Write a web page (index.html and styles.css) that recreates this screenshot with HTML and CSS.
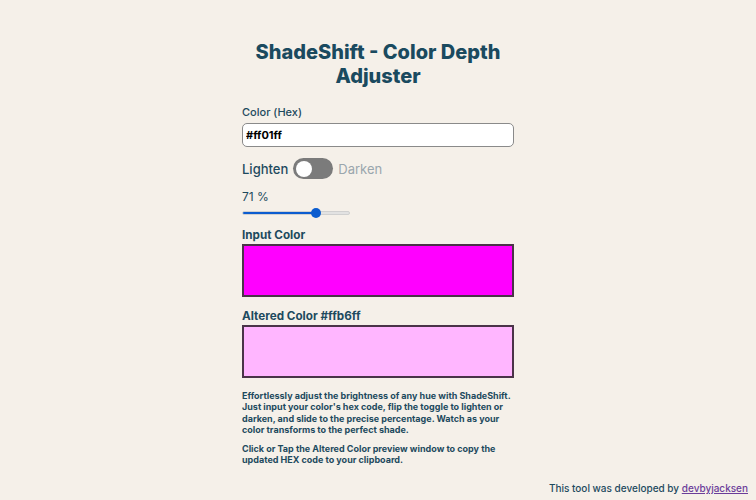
FILE: index.html
```html
<!DOCTYPE html>
<html lang="en">
<head>
<meta charset="utf-8">
<title>ShadeShift - Color Depth Adjuster</title>
<link rel="stylesheet" href="styles.css">
</head>
<body>
<main class="app">
  <h1 class="title">ShadeShift - Color Depth Adjuster</h1>
  <label class="label" for="hex">Color (Hex)</label>
  <input id="hex" class="hex-input" type="text" value="#ff01ff">
  <div class="toggle-row">
    <span class="toggle-text">Lighten</span>
    <span class="switch"><span class="knob"></span></span>
    <span class="toggle-text muted">Darken</span>
  </div>
  <div class="percent">71 %</div>
  <div class="slider">
    <div class="slider-fill" style="width:69%"></div>
    <div class="slider-thumb" style="left:69%"></div>
  </div>
  <h2 class="section first">Input Color</h2>
  <div class="swatch swatch-input"></div>
  <h2 class="section">Altered Color #ffb6ff</h2>
  <div class="swatch swatch-altered"></div>
  <p class="desc">Effortlessly adjust the brightness of any hue with ShadeShift. Just input your color's hex code, flip the toggle to lighten or darken, and slide to the precise percentage. Watch as your color transforms to the perfect shade.</p>
  <p class="desc">Click or Tap the Altered Color preview window to copy the updated HEX code to your clipboard.</p>
</main>
<footer class="footer">This tool was developed by <a href="#">devbyjacksen</a></footer>
</body>
</html>
```

FILE: styles.css
```css
* { box-sizing: border-box; }
html, body { height: 100%; }
body {
  margin: 0;
  background: #f5f0e9;
  font-family: Inter, "Noto Sans", sans-serif;
  color: #1d4a5e;
  display: flex;
  flex-direction: column;
}
.app {
  width: 272px;
  margin: 0 auto;
  padding-top: 40px;
  display: flex;
  flex-direction: column;
}
.title {
  margin: 0 0 16px;
  font-size: 20px;
  font-weight: 800;
  line-height: 24px;
  text-align: center;
  color: #1a4a5f;
}
.label {
  font-size: 11px;
  font-weight: 500;
  line-height: 16px;
  margin-bottom: 3px;
}
.hex-input {
  width: 272px;
  height: 24px;
  border: 1px solid #8a8a8a;
  border-radius: 5px;
  background: #fff;
  padding: 0 3px;
  font-family: Inter, sans-serif;
  font-size: 11px;
  font-weight: 700;
  color: #000;
}
.toggle-row {
  display: flex;
  align-items: center;
  gap: 5px;
  margin-top: 11px;
  height: 21px;
}
.toggle-text {
  font-size: 13px;
  font-weight: 500;
}
.toggle-text.muted { color: #9aa6ad; font-weight: 400; }
.switch {
  width: 40px;
  height: 21px;
  border-radius: 11px;
  background: #7b7b7b;
  display: flex;
  align-items: center;
  padding: 0 3px;
}
.knob {
  width: 16px;
  height: 16px;
  border-radius: 50%;
  background: #fff;
}
.percent {
  margin-top: 10px;
  font-size: 12px;
  line-height: 16px;
}
.slider {
  position: relative;
  width: 108px;
  height: 4px;
  margin-top: 6px;
  border-radius: 2px;
  background: #e2e2e2;
  border: 1px solid #d0d0d0;
}
.slider-fill {
  height: 100%;
  border-radius: 2px;
  background: #0b5ccf;
}
.slider-thumb {
  position: absolute;
  top: 50%;
  width: 10px;
  height: 10px;
  margin: -5px 0 0 -5px;
  border-radius: 50%;
  background: #0b5ccf;
}
.section {
  margin: 11px 0 1px;
  font-size: 11.7px;
  font-weight: 700;
  line-height: 16px;
}
.section.first { margin-top: 12px; }
.swatch {
  height: 53px;
  border: 2px solid #4a3348;
}
.swatch-input { background: #ff00ff; }
.swatch-altered { background: #ffb6ff; }
.desc {
  margin: 12px 0 0;
  font-size: 9px;
  font-weight: 700;
  line-height: 11.3px;
}
.desc + .desc { margin-top: 8px; }
.footer {
  margin-top: auto;
  padding: 0 8px 6px 0;
  text-align: right;
  font-size: 10px;
  font-weight: 500;
}
.footer a { color: #6b3d9a; }
```
